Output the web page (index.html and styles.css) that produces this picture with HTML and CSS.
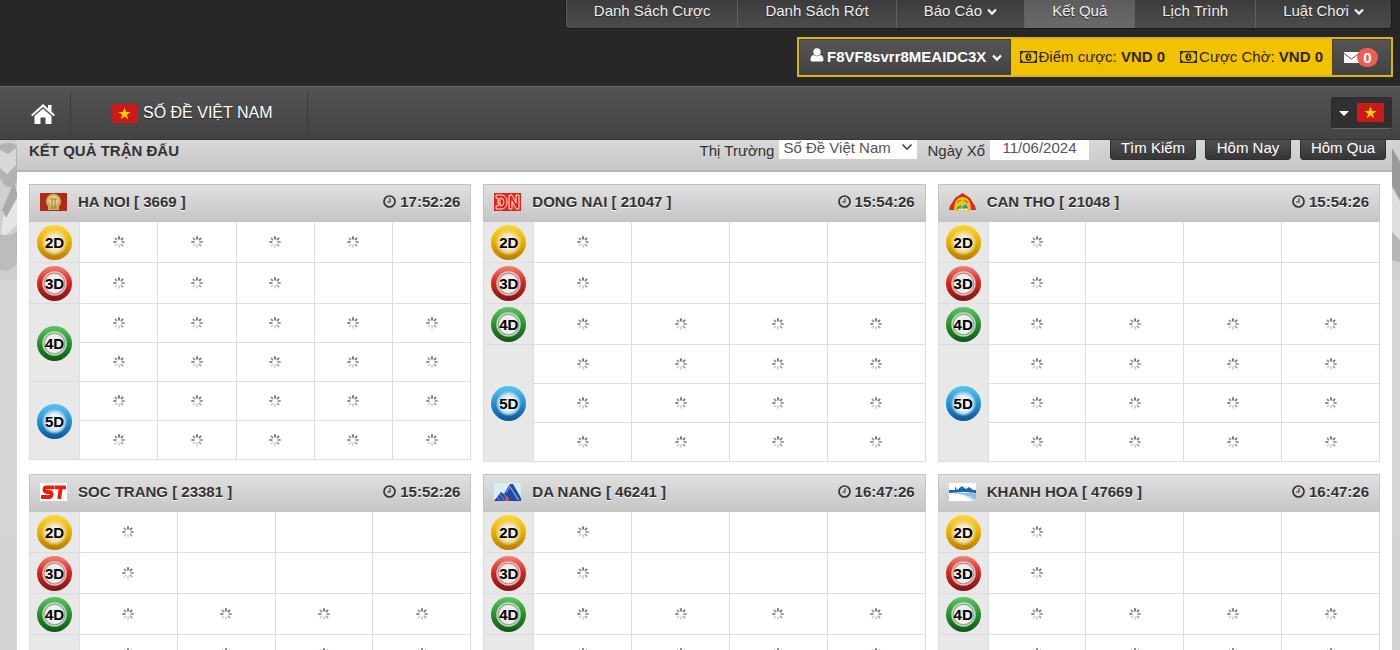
FILE: index.html
```html
<!DOCTYPE html>
<html lang="vi">
<head>
  <meta charset="UTF-8">
  <title>Kết Quả</title>
  <link rel="stylesheet" href="styles.css">
</head>
<body>

  <!-- shared icons -->
  <svg class="sprite" aria-hidden="true">
    <symbol id="chevron" viewBox="0 0 10 8"><path d="M1 1.5 L5 5.5 L9 1.5" fill="none" stroke="currentColor" stroke-width="2.4"/></symbol>
    <symbol id="user" viewBox="0 0 14 14"><circle cx="7" cy="4" r="3.7"/><path d="M3.5 7 Q7 9.4 10.5 7 Q13.5 7.5 13.5 12 Q13.3 13.6 11.5 13.6 H2.5 Q.7 13.6 .5 12 Q.5 7.5 3.5 7Z"/></symbol>
    <symbol id="money" viewBox="0 0 17 12"><path d="M0 0H17V12H0ZM3 1.2Q3 3 1.2 3V9Q3 9 3 10.8H14Q14 9 15.8 9V3Q14 3 14 1.2Z" fill-rule="evenodd"/><path d="M8.5 2.2A2.9 3.8 0 0 1 8.5 9.8A2.9 3.8 0 0 1 8.5 2.2M7.2 4.4L8 4.3V7H7.2V8H10V7H9.2V3.5H8.3Z" fill-rule="evenodd"/></symbol>
    <symbol id="clock" viewBox="0 0 13 13"><circle cx="6.5" cy="6.5" r="5.5" fill="none" stroke="currentColor" stroke-width="1.7"/><path d="M7 3.2V7H4.2" fill="none" stroke="currentColor" stroke-width="1.1"/></symbol>
    <symbol id="vn" viewBox="0 0 27 19"><rect width="27" height="19" rx="1" fill="#cc1a1a"/><path d="M13.5 3.5L15 8h4.6l-3.7 2.7 1.4 4.5-3.8-2.8-3.8 2.8 1.4-4.5L7.4 8H12Z" fill="#fc0"/></symbol>
    <symbol id="loading" viewBox="0 0 12 12">
      <g stroke-width="1.9">
        <path d="M6 .3V3.4" stroke="#777"/>
        <path d="M10.1 1.9L8 4" stroke="#7c7c7c"/>
        <path d="M11.7 6H8.6" stroke="#999"/>
        <path d="M10.1 10.1L8 8" stroke="#aaa"/>
        <path d="M6 11.7V8.6" stroke="#d4d4d4"/>
        <path d="M1.9 10.1L4 8" stroke="#d4d4d4"/>
        <path d="M.3 6H3.4" stroke="#888"/>
        <path d="M1.9 1.9L4 4" stroke="#999"/>
      </g>
    </symbol>
    <symbol id="hanoi" viewBox="0 0 27 18"><rect width="27" height="18" fill="#b02a1c"/><circle cx="13.5" cy="8.3" r="7.6" fill="#cfae5c"/><rect x="8" y="12" width="11" height="5" fill="#cfae5c"/><circle cx="13.5" cy="7.5" r="5" fill="#e4cf88"/><path d="M10 6H17M12 6V15M15 6V15M10 15H17" stroke="#a38435" stroke-width="1.1"/></symbol>
    <symbol id="dongnai" viewBox="0 0 27 18"><rect width="27" height="18" fill="#e4231b"/><g fill="none" stroke="#fff" stroke-width=".9"><path d="M2 2H8Q13 3 13 9Q13 15 8 16H2V13H4V5H2ZM6 5V8H4M6 10V13Q10 13 10 9Q10 5 6 5M4 10H7M15 16V2H18L22 10V2H25V16H22L18 8V16Z"/></g></symbol>
    <symbol id="cantho" viewBox="0 0 27 18"><path d="M13.5 0L21 5L24 10Q27 13 27 17H21L20 10H7L6 17H0Q0 13 3 10L6 5Z" fill="#dc2818"/><path d="M5 18Q5 4 13.5 4T22 18Z" fill="#efc31d"/><path d="M8 9L12 7M15 7L19 10" stroke="#a87c12" stroke-width="1.3"/><path d="M8 17V14L12 12V17Z" fill="#54a04c"/><path d="M13 14L17 11L19 15L14 16Z" fill="#3389c5"/><path d="M9 16.5H18" stroke="#e9eee0" stroke-width="1.4"/></symbol>
    <symbol id="soctrang" viewBox="0 0 27 18"><rect width="27" height="18" fill="#fff"/><g fill="none" stroke="#ec1c0c" stroke-width="3.8"><path d="M14.5 4.4H6.5Q4.5 4.5 4.5 6.5T6.5 9H9.5Q11.5 9.2 11.5 11.5T9.5 14H1"/><path d="M15 4.4H26M20.8 4L19.2 16"/></g></symbol>
    <symbol id="danang" viewBox="0 0 27 18"><rect width="27" height="18" rx="1" fill="#d8eef7"/><path d="M0 18L7 9L10 11L16 1H19L27 15V18Z" fill="#2449a6"/><path d="M12 10L16 4L24 17M15 2L25 17M10 11L14 17M6 11L10 17M3 14L6 17" stroke="#8db0e2" stroke-width=".8" fill="none"/><path d="M11 18V15L13 13L15 15V18M3 17H7M22 17H25" fill="#c45348"/></symbol>
    <symbol id="khanhhoa" viewBox="0 0 27 18"><rect width="27" height="18" fill="#fff"/><path d="M0 7H6V3L8 7L13 3L17 6L20 4L24 7H27V10L16 9L0 10Z" fill="#1e67aa"/><path d="M2 10H27V17Q17 11 2 10Z" fill="#8fc1dd"/><path d="M13 11L27 17V18H24Z" fill="#c7dfec"/></symbol>
  </svg>

  <header class="site-header">
    <div class="top">
      <nav class="menu">
        <a href="#">Danh Sách Cược</a>
        <a href="#">Danh Sách Rớt</a>
        <a href="#">Báo Cáo <svg class="chevron"><use href="#chevron"/></svg></a>
        <a href="#" class="active">Kết Quả</a>
        <a href="#">Lịch Trình</a>
        <a href="#">Luật Chơi <svg class="chevron"><use href="#chevron"/></svg></a>
      </nav>
      <div class="account">
        <button class="user"><svg class="user-icon"><use href="#user"/></svg>F8VF8svrr8MEAIDC3X <svg class="chevron"><use href="#chevron"/></svg></button>
        <div class="balance"><svg class="money"><use href="#money"/></svg>Điểm cược: <b>VND 0</b></div>
        <div class="balance"><svg class="money"><use href="#money"/></svg>Cược Chờ: <b>VND 0</b></div>
        <button class="mail" aria-label="Tin nhắn">
          <svg class="envelope" viewBox="0 0 15 13"><path d="M0 1H15V12H0Z" fill="#fff"/><path d="M0 2.5L7.5 8L15 2.5" fill="none" stroke="#555"/></svg><span class="badge">0</span>
        </button>
      </div>
    </div>
    <nav class="main-nav">
      <a href="#" class="home" aria-label="Trang chủ">
        <svg viewBox="0 0 24 20"><path d="M12 0L17 4.5V1H20.5V7.5L24 11L22.7 12.3L12 3L1.3 12.3L0 11Z"/><path d="M12 4.7L20.5 12V20H14.5V13.5H9.5V20H3.5V12Z"/></svg>
      </a>
      <a href="#" class="lottery"><svg class="flag"><use href="#vn"/></svg>SỐ ĐỀ VIỆT NAM</a>
      <button class="language" aria-label="Ngôn ngữ"><span class="caret"></span><svg class="flag"><use href="#vn"/></svg></button>
    </nav>
  </header>

  <svg class="balls-bg left" viewBox="0 0 18 140" preserveAspectRatio="none" aria-hidden="true">
    <rect width="18" height="140" fill="#cfcfcf"/><path d="M0 5Q12 0 18 7V40Q8 55 0 38Z" fill="#b2b2b2"/><path d="M0 10L8 14L16 8V25L7 34L0 28Z" fill="#d8d8d8"/><path d="M18 45L4 72L0 100L18 84Z" fill="#e6e6e6"/><path d="M14 42L2 70L6 78L18 56Z" fill="#aaa"/><path d="M0 94Q12 98 18 90V122Q10 134 0 130Z" fill="#bcbcbc"/>
  </svg>
  <svg class="balls-bg right" viewBox="0 0 8 140" preserveAspectRatio="none" aria-hidden="true">
    <rect width="8" height="140" fill="#d0d0d0"/><path d="M0 8L8 22V60L0 46Z" fill="#999"/><path d="M0 48L8 62V106L0 92Z" fill="#dedede"/><path d="M0 92L8 100V122L0 120Z" fill="#b5b5b5"/>
  </svg>

  <main>
    <form class="toolbar">
      <h1>KẾT QUẢ TRẬN ĐẤU</h1>
      <label for="market">Thị Trường</label>
      <select id="market"><option>Số Đề Việt Nam</option></select>
      <label for="date" class="date-label">Ngày Xổ</label>
      <input id="date" type="text" value="11/06/2024">
      <div class="buttons">
        <button type="button">Tìm Kiếm</button>
        <button type="button">Hôm Nay</button>
        <button type="button">Hôm Qua</button>
      </div>
    </form>
    <div id="results" class="results"></div>
  </main>

  <script>
    // rows: [ball, number of results in each line]
    const north = [["2D", [4]], ["3D", [3]], ["4D", [5, 5]], ["5D", [5, 5]]];
    const south = [["2D", [1]], ["3D", [1]], ["4D", [4]], ["5D", [4, 4, 4]]];
    const markets = [
      { name: "HA NOI", id: 3669, time: "17:52:26", logo: "hanoi", cols: 5, rows: north },
      { name: "DONG NAI", id: 21047, time: "15:54:26", logo: "dongnai", cols: 4, rows: south },
      { name: "CAN THO", id: 21048, time: "15:54:26", logo: "cantho", cols: 4, rows: south },
      { name: "SOC TRANG", id: 23381, time: "15:52:26", logo: "soctrang", cols: 4, rows: south },
      { name: "DA NANG", id: 46241, time: "16:47:26", logo: "danang", cols: 4, rows: south },
      { name: "KHANH HOA", id: 47669, time: "16:47:26", logo: "khanhhoa", cols: 4, rows: south }
    ];

    function lineCells(count, cols) {
      let html = "";
      for (let i = 0; i < cols; i++) {
        html += "<td>" + (i < count ? '<svg class="loading"><use href="#loading"/></svg>' : "") + "</td>";
      }
      return html;
    }

    function tableRows(market) {
      return market.rows.map(([ball, lines]) => lines.map((count, i) => {
        const head = i === 0
          ? `<th scope="rowgroup" rowspan="${lines.length}"><span class="ball ball-${ball.toLowerCase()}">${ball}</span></th>`
          : "";
        return `<tr>${head}${lineCells(count, market.cols)}</tr>`;
      }).join("")).join("");
    }

    document.getElementById("results").innerHTML = markets.map(market => `
      <section class="card">
        <header class="card-header">
          <svg class="logo"><use href="#${market.logo}"/></svg>
          <h2>${market.name} [ ${market.id} ]</h2>
          <div class="time"><svg class="clock"><use href="#clock"/></svg>${market.time}</div>
        </header>
        <table>${tableRows(market)}</table>
      </section>`).join("");
  </script>

</body>
</html>
```
FILE: styles.css
```css
* {
  box-sizing: border-box;
}

html {
  overflow: hidden;
}

body {
  margin: 0;
  font-family: "Liberation Sans", Arial, sans-serif;
  font-size: 15px;
  color: #333;
  background: linear-gradient(#d8d8d8, #d3d3d3);
}

a {
  color: #fff;
  text-decoration: none;
}

button, input, select {
  font: inherit;
}

.sprite {
  display: none;
}

.chevron {
  width: 10px;
  height: 8px;
  margin-left: 1px;
}

/* header */
.site-header {
  position: sticky;
  top: 0;
  z-index: 10;
}

.top {
  height: 86px;
  padding: 0 7px;
  background: #272727;
  display: flex;
  flex-direction: column;
  align-items: flex-end;
  gap: 8px;
}

.menu {
  display: flex;
  height: 29px;
  margin-right: 1px;
  border: 1px solid #1a1a1a;
  border-top: none;
  border-radius: 0 0 4px 4px;
  overflow: hidden;
  background: linear-gradient(#3c3c3c, #4c4c4c);
}

.menu a {
  padding: 1px 27px 0;
  line-height: 20px;
  color: #eee;
  border-left: 1px solid #606060;
  text-shadow: 0 1px 1px #222;
}

.menu .active {
  background: linear-gradient(#5c5c5c, #6a6a6a);
}

.account {
  display: flex;
  height: 40px;
  background: #f2c202;
  border: 2px solid #dab31c;
}

.user, .mail {
  border: 1px solid #4a4528;
  background: linear-gradient(#555, #434343);
  color: #fff;
}

.user {
  padding: 0 8px 2px 10px;
  font-weight: bold;
}

.user-icon {
  width: 14px;
  height: 14px;
  margin-right: 3px;
  fill: #fff;
}

.balance {
  padding-left: 9px;
  line-height: 36px;
  color: #2e2705;
}

.balance + .balance {
  padding-left: 15px;
  padding-right: 9px;
}

.money {
  width: 17px;
  height: 12px;
  margin-right: 2px;
  vertical-align: -1px;
  fill: #332b05;
}

.mail {
  display: flex;
  align-items: center;
  width: 59px;
  padding: 0 11px;
}

.envelope {
  width: 15px;
  height: 13px;
}

.badge {
  width: 21px;
  margin-left: -2px;
  border-radius: 10px;
  background: #ea6153;
  font-weight: bold;
  line-height: 19px;
}

.main-nav {
  display: flex;
  align-items: center;
  height: 54px;
  padding-right: 8px;
  border-top: 1px solid #686868;
  border-bottom: 1px solid #333;
  background: linear-gradient(#535353, #434343);
}

.home, .lottery {
  display: flex;
  align-items: center;
  height: 44px;
  border-right: 1px solid #3a3a3a;
}

.home {
  width: 71px;
  padding: 2px 0 0 31px;
}

.home svg {
  width: 24px;
  height: 20px;
  fill: #fff;
}

.lottery {
  padding: 0 34px 0 40px;
  font-size: 16px;
  text-shadow: 0 1px 1px #222;
}

.flag {
  width: 27px;
  height: 19px;
}

.lottery .flag {
  margin-right: 5px;
}

.language {
  display: flex;
  align-items: center;
  gap: 8px;
  height: 32px;
  margin-left: auto;
  padding: 0 7px;
  border: 1px solid #2b2b2b;
  border-bottom-color: #666;
  border-radius: 3px;
  background: #303030;
}

.language .flag {
  margin-top: -2px;
}

.caret {
  border: 5px solid transparent;
  border-top-color: #fff;
  border-bottom: none;
}

/* side pictures */
.balls-bg {
  position: absolute;
  top: 140px;
  height: 140px;
}

.left {
  left: 0;
  width: 18px;
}

.right {
  right: 0;
  width: 8px;
}

/* content */
main {
  position: relative;
  margin: -20px 8px 0 17px;
  background: #fff;
}

.toolbar {
  display: flex;
  align-items: center;
  height: 52px;
  padding: 4px 6px 0 12px;
  background: linear-gradient(#e2e2e2, #c8c8c8);
  border-bottom: 2px solid #b5b5b5;
}

.toolbar h1 {
  margin: 0 auto 0 0;
  padding-top: 6px;
  font-size: 15px;
}

.toolbar label {
  padding-top: 6px;
}

.toolbar select {
  appearance: none;
  width: 138px;
  height: 23px;
  margin-left: 5px;
  padding: 0 4px;
  border: none;
  border-radius: 0;
  background: #fff url("data:image/svg+xml,%3Csvg xmlns='http://www.w3.org/2000/svg' width='12' height='8'%3E%3Cpath d='M1.5 1.5L6 6L10.5 1.5' fill='none' stroke='%23444' stroke-width='1.6'/%3E%3C/svg%3E") no-repeat right 4px center;
  color: #555;
}

.toolbar .date-label {
  margin-left: 10px;
}

.toolbar input {
  width: 99px;
  height: 26px;
  margin-left: 5px;
  padding: 0;
  border: none;
  text-align: center;
  color: #555;
}

.buttons {
  display: flex;
  gap: 9px;
  margin-left: 21px;
}

.buttons button {
  width: 86px;
  height: 25px;
  padding: 0;
  border: 1px solid #2f2f2f;
  border-radius: 3px;
  background: linear-gradient(#555, #363636);
  color: #fff;
}

.results {
  display: grid;
  grid-template-columns: repeat(3, 1fr);
  align-items: start;
  gap: 12px;
  padding: 12px;
}

.card-header {
  display: flex;
  align-items: center;
  height: 38px;
  padding: 0 10px 3px;
  border: 1px solid #c3c3c3;
  background: linear-gradient(#e0e0e0, #c6c6c6);
  text-shadow: 0 1px 0 #fff;
}

.card-header h2 {
  margin: 0;
  font-size: 15px;
}

.logo {
  width: 27px;
  height: 18px;
  margin-right: 11px;
}

.time {
  display: flex;
  align-items: center;
  gap: 4px;
  margin-left: auto;
  font-weight: bold;
}

.clock {
  width: 13px;
  height: 13px;
}

table {
  width: 100%;
  table-layout: fixed;
  border-spacing: 0;
  border-left: 1px solid #ddd;
}

th, td {
  height: 39px;
  padding: 0;
  border-right: 1px solid #ddd;
  border-bottom: 1px solid #ddd;
  text-align: center;
}

th {
  width: 50px;
  padding: 3px 0 2px;
  background: #e8e8e8;
}

.loading {
  display: block;
  width: 12px;
  height: 12px;
  margin: 0 auto;
}

.ball {
  display: block;
  width: 35px;
  height: 35px;
  margin: 0 auto;
  border-radius: 50%;
  color: #000;
  line-height: 35px;
}

.ball-2d {
  background: radial-gradient(circle, #f4efdc 25%, #eed98a 40%, transparent 54%), linear-gradient(#ffd83a, #e6ae00 50%, #b87c00);
}

.ball-3d {
  background: radial-gradient(circle, #eee 36%, #b98080 42%, #f0d0d0 46%, transparent 52%), linear-gradient(#f08478, #d42a20 45%, #7c1518);
}

.ball-4d {
  background: radial-gradient(circle, #eee 36%, #7fa07f 42%, #d0e8d0 46%, transparent 52%), linear-gradient(#62c465, #27902b 50%, #12561a);
}

.ball-5d {
  background: radial-gradient(circle, #eef3f6 28%, #b4dcf0 40%, transparent 52%), linear-gradient(#5cc4f2, #2490d0 50%, #0f5594);
}
```
